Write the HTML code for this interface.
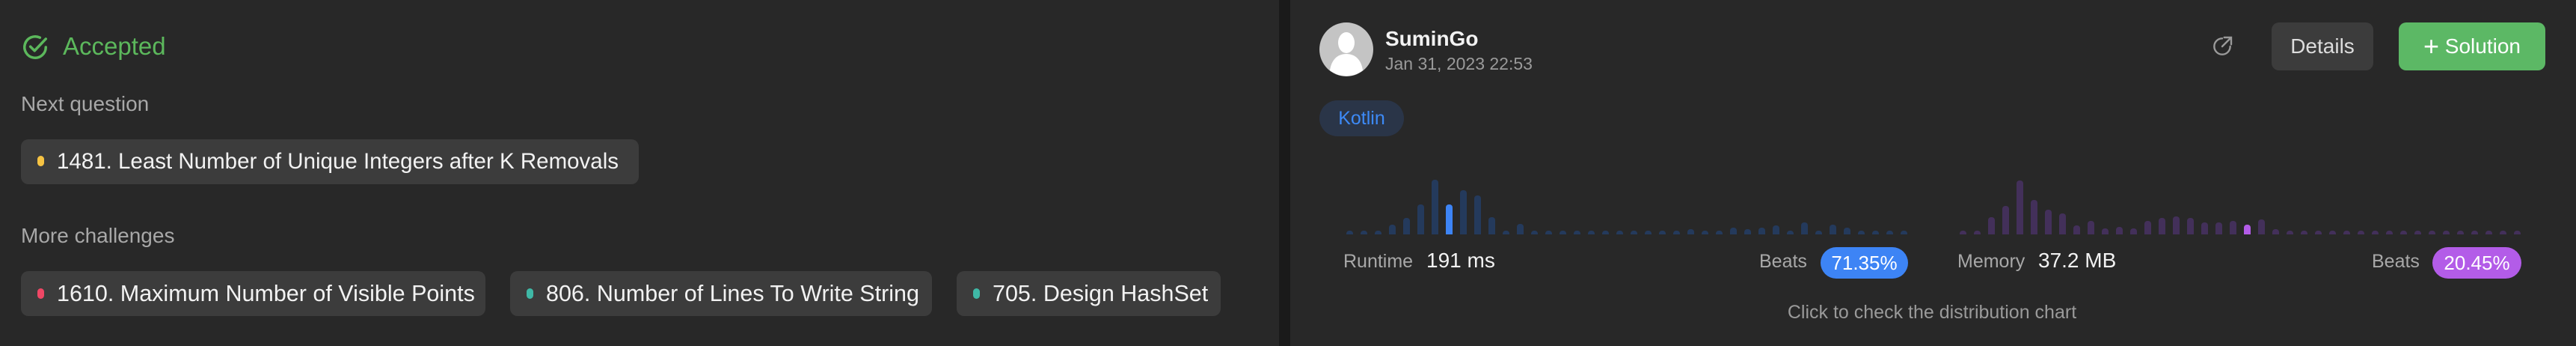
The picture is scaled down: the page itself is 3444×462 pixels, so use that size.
<!DOCTYPE html>
<html><head><meta charset="utf-8"><style>
*{margin:0;padding:0;box-sizing:border-box}
body{width:3444px;height:462px;background:#1a1a1a;font-family:"Liberation Sans",sans-serif;position:relative;overflow:hidden}
.p{position:absolute;background:#282828}
.a{position:absolute;white-space:nowrap}
.pill{position:absolute;background:#3c3c3c;border-radius:10px;height:60px;color:#f2f2f2;font-size:29.5px;line-height:60px;padding-left:22px}
.pill i{display:inline-block;width:9px;height:14px;border-radius:5px;margin-right:17px;vertical-align:3px}
.bar{position:absolute;bottom:0;width:9px;border-radius:4px 4px 0 0}
</style></head><body>
<div class="p" style="left:0;top:0;width:1710px;height:462px"></div>
<div class="p" style="left:1725px;top:0;width:1719px;height:462px"></div>

<svg class="a" style="left:28px;top:44px" width="38" height="38" viewBox="0 0 24 24" fill="none" stroke="#5cb85c" stroke-width="2.2" stroke-linecap="round" stroke-linejoin="round"><path d="M21 12a9 9 0 1 1-5-8.06"/><path d="M8 11.5l3.5 3.5L21 5"/></svg>
<div class="a" style="left:84px;top:43px;font-size:33px;color:#5cb85c;font-weight:500">Accepted</div>
<div class="a" style="left:28px;top:123px;font-size:28px;color:#a8a8a8">Next question</div>
<div class="pill" style="left:28px;top:186px;width:826px"><i style="background:#f6c343"></i>1481. Least Number of Unique Integers after K Removals</div>
<div class="a" style="left:28px;top:299px;font-size:28px;color:#a8a8a8">More challenges</div>
<div class="pill" style="left:28px;top:362px;width:621px;font-size:30.5px"><i style="background:#ef4765"></i>1610. Maximum Number of Visible Points</div>
<div class="pill" style="left:682px;top:362px;width:564px;font-size:30.5px"><i style="background:#3fb8a6"></i>806. Number of Lines To Write String</div>
<div class="pill" style="left:1279px;top:362px;width:353px;font-size:30.5px"><i style="background:#3fb8a6"></i>705. Design HashSet</div>

<svg class="a" style="left:1764px;top:30px" width="72" height="72" viewBox="0 0 72 72"><circle cx="36" cy="36" r="36" fill="#c4c4c4"/><ellipse cx="36" cy="27" rx="11" ry="14" fill="#fff"/><path d="M14 64c2-14 10-22 22-22s20 8 22 22a36 36 0 0 1-44 0z" fill="#fff"/></svg>
<div class="a" style="left:1852px;top:36px;font-size:28px;color:#f2f2f2;font-weight:600">SuminGo</div>
<div class="a" style="left:1852px;top:72px;font-size:23px;color:#9a9a9a">Jan 31, 2023 22:53</div>
<svg class="a" style="left:2955px;top:46px" width="32" height="32" viewBox="0 0 24 24" fill="none" stroke="#9a9a9a" stroke-width="1.8" stroke-linecap="round"><path d="M20 12a8 8 0 1 1-8-8"/><path d="M14 3h7v7M21 3l-9 9"/></svg>
<div class="a" style="left:3037px;top:30px;width:136px;height:64px;background:#3c3c3c;border-radius:10px;color:#ddd;font-size:28px;line-height:64px;text-align:center">Details</div>
<div class="a" style="left:3207px;top:30px;width:196px;height:64px;background:#5cb865;border-radius:10px;color:#fff;font-size:28px;line-height:64px;text-align:center;font-weight:500"><span style="font-size:36px;font-weight:300;vertical-align:-3px">+</span> Solution</div>
<div class="a" style="left:1764px;top:134px;width:113px;height:48px;background:#2a3548;border-radius:24px;color:#3d8af7;font-size:25px;line-height:48px;text-align:center">Kotlin</div>

<div class="a" id="rt" style="left:1800px;top:230px;width:750px;height:83px"></div>
<div class="a" id="mm" style="left:2620px;top:230px;width:750px;height:83px"></div>

<div class="a" style="left:1796px;top:335px;font-size:25px;color:#a8a8a8">Runtime</div>
<div class="a" style="left:1907px;top:332px;font-size:28px;color:#f2f2f2">191 ms</div>
<div class="a" style="left:2352px;top:335px;font-size:25px;color:#a8a8a8">Beats</div>
<div class="a" style="left:2434px;top:330px;width:117px;height:42px;background:#3d84f5;border-radius:21px;color:#fff;font-size:26px;line-height:42px;text-align:center">71.35%</div>
<div class="a" style="left:2617px;top:335px;font-size:25px;color:#a8a8a8">Memory</div>
<div class="a" style="left:2725px;top:332px;font-size:28px;color:#f2f2f2">37.2 MB</div>
<div class="a" style="left:3171px;top:335px;font-size:25px;color:#a8a8a8">Beats</div>
<div class="a" style="left:3252px;top:330px;width:119px;height:42px;background:#b35ce8;border-radius:21px;color:#fff;font-size:26px;line-height:42px;text-align:center">20.45%</div>
<div class="a" style="left:2333px;top:403px;width:500px;text-align:center;font-size:25px;color:#9a9a9a">Click to check the distribution chart</div>

<script>
function mk(id,h,hi,c,ch){var e=document.getElementById(id);for(var i=0;i<h.length;i++){var d=document.createElement('div');d.className='bar';d.style.left=(i*19)+'px';d.style.height=Math.round(h[i]/3)+'px';d.style.background=i==hi?ch:c;e.appendChild(d);}}
mk('rt',[16,16,16,40,65,120,220,120,178,155,70,16,42,16,16,16,16,16,16,16,16,16,16,16,20,16,16,28,20,28,36,16,48,16,40,28,16,16,16,16],7,'#243a5c','#3d84f5');
mk('mm',[16,16,70,115,215,138,100,85,35,55,25,30,25,55,65,72,65,48,48,55,40,60,22,16,16,16,16,16,16,16,16,16,16,16,16,16,16,16,16,16],20,'#43305a','#b35ce8');
</script>
</body></html>
